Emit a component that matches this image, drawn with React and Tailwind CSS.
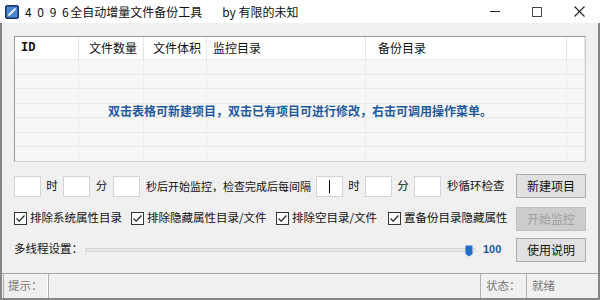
import React from "react";

const cjk = "font-['Noto_Sans_CJK_SC','Microsoft_YaHei',sans-serif]";

const cols = [
    { title: "ID", w: "w-[64px]", pl: "pl-[6px]", mono: true },
    { title: "文件数量", w: "w-[65px]", pl: "pl-[10px]" },
    { title: "文件体积", w: "w-[63px]", pl: "pl-[9px]" },
    { title: "监控目录", w: "w-[159px]", pl: "pl-[6px]" },
    { title: "备份目录", w: "w-[201px]", pl: "pl-[12px]" },
];

const Box = ({ children }) => (
    <div className="w-[27px] h-[21px] bg-white border border-[#d4d4d4] flex items-center justify-center">
        {children}
    </div>
);

const Check = ({ label, w }) => (
    <div className={`flex items-center ${w}`}>
        <div className="w-[13px] h-[13px] border border-[#333] bg-white flex items-center justify-center">
            <svg width="11" height="11" viewBox="0 0 11 11">
                <path d="M1.5 5.5 L4.2 8.2 L9.5 2.5" fill="none" stroke="#222" strokeWidth="1.2" />
            </svg>
        </div>
        <span className="ml-[3px] text-[11.5px] text-[#111] leading-none">{label}</span>
    </div>
);

const Btn = ({ children, disabled }) => (
    <button
        className={`w-[70px] h-[24px] border text-[12px] leading-none ${
            disabled
                ? "bg-[#cccccc] border-[#bfbfbf] text-[#a0a0a0]"
                : "bg-[#e1e1e1] border-[#adadad] text-[#111]"
        }`}
    >
        {children}
    </button>
);

const App = () => {
    return (
        <div className={`w-[600px] h-[300px] flex flex-col bg-[#f0f0f0] border-x-2 border-b-2 border-[#858585] ${cjk}`}>
            {/* title bar */}
            <div className="h-[23px] bg-white flex items-center shrink-0 -mx-[2px]">
                <svg width="14" height="14" viewBox="0 0 14 14" className="ml-[5px]">
                    <rect x="0.5" y="0.5" width="13" height="13" rx="1.5" fill="#2f5f9e" stroke="#1b2f4f" />
                    <rect x="2" y="2" width="10" height="10" fill="#4a86cf" />
                    <path d="M3.5 10.5 L10.5 3.5" stroke="#e6f2ff" strokeWidth="2" />
                    <path d="M3 11 L4.5 9.5" stroke="#9fd0ff" strokeWidth="1.5" />
                </svg>
                <span className="ml-[6px] text-[12px] text-[#111]">
                    <span className="tracking-[1.5px]">4 0 9 6</span>全自动增量文件备份工具
                </span>
                <span className="ml-[20px] text-[12px] text-[#111]">by 有限的未知</span>
                <div className="ml-auto flex h-full">
                    <div className="w-[42px] flex items-center justify-center">
                        <div className="w-[10px] h-px bg-[#222]" />
                    </div>
                    <div className="w-[42px] flex items-center justify-center">
                        <div className="w-[10px] h-[10px] border border-[#444]" />
                    </div>
                    <div className="w-[42px] flex items-center justify-center">
                        <svg width="11" height="11" viewBox="0 0 11 11">
                            <path d="M0.5 0.5 L10.5 10.5 M10.5 0.5 L0.5 10.5" stroke="#222" strokeWidth="1.1" />
                        </svg>
                    </div>
                </div>
            </div>

            {/* grid */}
            <div className="mt-[13px] mx-[12px] h-[126px] shrink-0 relative border border-[#9a9a9a] border-r-[#d0d0d0] border-b-[#d0d0d0] bg-[#f7f7f7] flex flex-col">
                <div className="h-[22px] bg-white flex shrink-0">
                    {cols.map((c) => (
                        <div
                            key={c.title}
                            className={`${c.w} ${c.pl} border-r border-[#e4e4e4] flex items-center ${
                                c.mono ? "font-['Liberation_Mono',monospace] font-bold text-[12px]" : "text-[12px]"
                            } text-[#111]`}
                        >
                            {c.title}
                        </div>
                    ))}
                    <div className="flex-1 border-r border-[#e4e4e4]" />
                </div>
                {[0, 1, 2, 3, 4, 5, 6].map((r) => (
                    <div key={r} className="flex-1 flex border-t border-[#e9e9e9]">
                        {cols.map((c) => (
                            <div key={c.title} className={`${c.w} border-r border-[#ececec]`} />
                        ))}
                        <div className="flex-1 border-r border-[#ececec]" />
                    </div>
                ))}
                <div className="absolute inset-x-0 top-[65px] text-center text-[12px] font-bold text-[#1d5a9e]">
                    双击表格可新建项目，双击已有项目可进行修改，右击可调用操作菜单。
                </div>
            </div>

            {/* row 1 */}
            <div className="mt-[12px] h-[24px] px-[12px] flex items-center text-[11.5px] text-[#111]">
                <Box />
                <span className="w-[22px] text-center">时</span>
                <Box />
                <span className="w-[23px] text-center">分</span>
                <Box />
                <span className="w-[176px] pl-[6px] whitespace-nowrap text-[11px]">秒后开始监控，检查完成后每间隔</span>
                <Box>
                    <div className="w-px h-[13px] bg-black" />
                </Box>
                <span className="w-[22px] text-center">时</span>
                <Box />
                <span className="w-[22px] text-center">分</span>
                <Box />
                <span className="pl-[6px]">秒循环检查</span>
                <div className="ml-auto">
                    <Btn>新建项目</Btn>
                </div>
            </div>

            {/* row 2 */}
            <div className="mt-[8px] h-[24px] px-[12px] flex items-center">
                <Check label="排除系统属性目录" w="w-[117px]" />
                <Check label="排除隐藏属性目录/文件" w="w-[145px]" />
                <Check label="排除空目录/文件" w="w-[112px]" />
                <Check label="置备份目录隐藏属性" w="w-[120px]" />
                <div className="ml-auto">
                    <Btn disabled>开始监控</Btn>
                </div>
            </div>

            {/* row 3 */}
            <div className="mt-[7px] h-[24px] px-[12px] flex items-center">
                <span className="w-[71px] text-[11.5px] text-[#111]">多线程设置：</span>
                <div className="w-[381px] h-[4px] bg-[#e7e7e7] border border-[#d6d6d6] mt-[2px]" />
                <svg width="8" height="12" viewBox="0 0 8 12" className="mt-[3px] -ml-[1px]">
                    <path d="M0.5 1 Q0.5 0.5 1 0.5 L7 0.5 Q7.5 0.5 7.5 1 L7.5 9 L4 11.5 L0.5 9 Z" fill="#1f6fcc" />
                </svg>
                <div className="w-[3px] h-[4px] bg-[#e7e7e7] border-y border-[#d6d6d6] mt-[2px]" />
                <span className="ml-[7px] text-[11px] font-bold text-[#1d5a9e] font-['Liberation_Sans',sans-serif]">100</span>
                <div className="ml-auto">
                    <Btn>使用说明</Btn>
                </div>
            </div>

            {/* status bar */}
            <div className="mt-[12px] flex-1 flex border-t border-[#a8a8a8] text-[11.5px] text-[#777]">
                <div className="ml-[1px] w-[45px] border-l border-[#b0b0b0] border-r border-r-white pl-[4px] flex items-center">提示：</div>
                <div className="flex-1 border-l border-[#b0b0b0]" />
                <div className="w-[46px] border-l border-[#b0b0b0] pl-[5px] flex items-center">状态：</div>
                <div className="w-[72px] border-l border-[#b0b0b0] pl-[5px] flex items-center">就绪</div>
            </div>
        </div>
    );
};

export default App;
